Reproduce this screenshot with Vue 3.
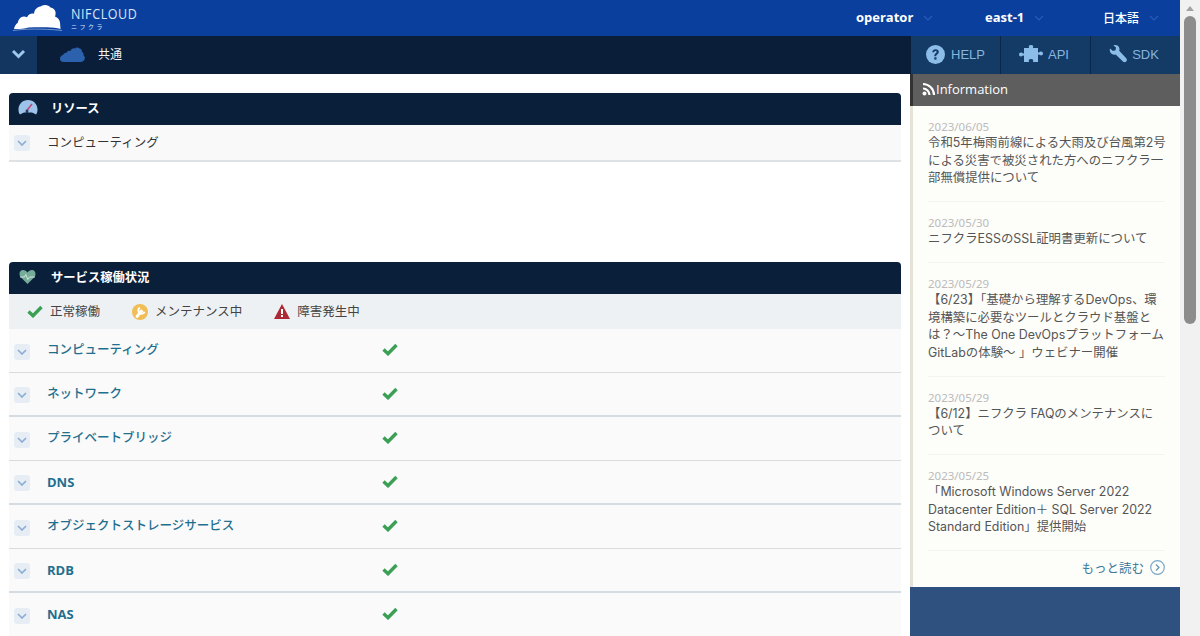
<script setup>
const statusRows = [
  { name: 'コンピューティング' },
  { name: 'ネットワーク' },
  { name: 'プライベートブリッジ' },
  { name: 'DNS', latin: true },
  { name: 'オブジェクトストレージサービス' },
  { name: 'RDB', latin: true },
  { name: 'NAS', latin: true }
]
const news = [
  { date: '2023/06/05', lines: ['令和5年梅雨前線による大雨及び台風第2号', 'による災害で被災された方へのニフクラ一', '部無償提供について'] },
  { date: '2023/05/30', lines: ['ニフクラESSのSSL証明書更新について'] },
  { date: '2023/05/29', lines: ['【6/23】「基礎から理解するDevOps、環', '境構築に必要なツールとクラウド基盤と', 'は？～The One DevOpsプラットフォーム', 'GitLabの体験～ 」ウェビナー開催'] },
  { date: '2023/05/29', lines: ['【6/12】ニフクラ FAQのメンテナンスに', 'ついて'] },
  { date: '2023/05/25', lines: ['「Microsoft Windows Server 2022', 'Datacenter Edition＋ SQL Server 2022', 'Standard Edition」提供開始'] }
]
</script>

<template>
  <div class="page">
    <div class="app">
      <header class="top">
        <div class="logo">
          <svg width="50" height="28" viewBox="0 0 50 28"><path fill="#fff" d="M1 25c.5-3 2-5 4-6.500 0-1 .2-2 1-3 1-2 3-3 5-3 1 0 2 .2 3 .8 1-2.300 3-3.800 5.500-3.800.6 0 1 0 1.500.2C21.500 5.500 24 3 27.500 2.500c1-.7 2.500-1.500 4.500-1.500 2.500 0 4.500 1 5.500 2.500 2.500.3 4.500 2 5 4.500.3 1.500 0 3-.5 4.500 2.800 1 4.500 3 5 6 .2 2 .3 4 .5 6.500-4-1-8-1.700-14-1.800-6-.1-12-.1-18 .3C11 24.700 6 25.200 1 25z"/><path d="M0 26.500c6-.8 12-1.300 20-1.400 9-.1 20 .3 29 1.400" stroke="#b9cdeb" stroke-width=".6" fill="none"/></svg>
          <div class="logo-text">
            <span class="logo-name">NIFCLOUD</span>
            <span class="logo-sub">ニフクラ</span>
          </div>
        </div>
        <nav class="top-menu">
          <div class="tm tm1"><b>operator</b><svg class="tm-ch" width="10" height="6" viewBox="0 0 10 6"><path d="M1 1l4 4 4-4" fill="none" stroke="#2a5bb5" stroke-width="1.2"/></svg></div>
          <div class="tm tm2"><b>east-1</b><svg class="tm-ch" width="10" height="6" viewBox="0 0 10 6"><path d="M1 1l4 4 4-4" fill="none" stroke="#2a5bb5" stroke-width="1.2"/></svg></div>
          <div class="tm tm3"><b>日本語</b><svg class="tm-ch" width="10" height="6" viewBox="0 0 10 6"><path d="M1 1l4 4 4-4" fill="none" stroke="#2a5bb5" stroke-width="1.2"/></svg></div>
        </nav>
      </header>

      <div class="subnav">
        <div class="toggle">
          <svg width="15" height="10" viewBox="0 0 15 10"><path d="M2 2l5.500 5.500L13 2" fill="none" stroke="#9cc9ec" stroke-width="3"/></svg>
        </div>
        <svg class="sub-cloud" width="25" height="17" viewBox="0 0 25 17"><path fill="#2c62ad" d="M0 13c0-2 1-3.500 3-4 .5-1.500 2-2.500 3.500-2.300C7.500 5 9 4.500 10.500 5 11 3 13 2 15 2.500 16 1 18.500 1 19.500 2.500c1.500 0 2.500 1.500 2.300 3 1.500 1 2.200 2.500 1.700 4 1.300.8 1.700 2.500 1 4-.7 1.500-2 2.500-4 2.500H4c-2.500 0-4-1.200-4-3z"/></svg>
        <span class="sub-title">共通</span>
        <div class="tools">
          <div class="tool">
            <svg width="19" height="19" viewBox="0 0 19 19"><circle cx="9.500" cy="9.500" r="9.500" fill="#8cbde8"/><path d="M6.300 7.300c.1-1.900 1.400-3 3.300-3 1.900 0 3.200 1.100 3.200 2.700 0 2.200-2.600 2.300-2.600 4.300H8.300c0-2.900 2.300-3 2.300-4.200 0-.6-.4-1-1.100-1-.7 0-1.100.5-1.200 1.200z" fill="#143a66"/><rect x="8.300" y="12.300" width="2.200" height="2.300" fill="#143a66"/></svg>
            <span>HELP</span>
          </div>
          <div class="tool tool-shift">
            <svg width="24" height="19" viewBox="0 0 24 19"><path fill="#8cbde8" d="M5 3h4.500c.6 0 .7-.5.400-1C9.500 1.300 9.800 0 12 0s2.500 1.300 2.100 2c-.3.500-.2 1 .4 1H19v4c0 .6.500.7 1 .4.800-.5 1-.9 2-.9 1.200 0 2 .9 2 2s-.8 2-2 2c-1 0-1.200-.4-2-.9-.5-.3-1-.2-1 .4V17h-4.500c-.6 0-.7-.5-.4-1 .4-.7.100-2-2.100-2s-2.500 1.300-2.100 2c.3.500.2 1-.4 1H5v-6c0-.6-.5-.7-1-.4-.8.500-1 .9-2 .9-1.200 0-2-.9-2-2s.8-2 2-2c1 0 1.200.4 2 .9.500.3 1 .2 1-.4z"/></svg>
            <span>API</span>
          </div>
          <div class="tool tool-shift">
            <svg width="18" height="19" viewBox="0 0 18 19"><path fill="#8cbde8" d="M1 3.500L4 6l2.500-.8.500-2.700L4.500.4C6.800-.4 9 .3 10 2.200c.6 1.200.6 2.400.2 3.500l7 7.500c.9 1 .9 2.400 0 3.300-.9.900-2.300 1-3.300.1L6.700 9.400c-1.300.4-2.600.3-3.700-.4C1 7.900.4 5.700 1 3.500z"/></svg>
            <span>SDK</span>
          </div>
        </div>
      </div>

      <div class="content">
        <main class="main">
          <section class="panel res">
            <h2 class="panel-head">
              <svg class="ph-icon" width="20" height="18" viewBox="0 0 20 18"><path fill="#9cc4ea" d="M10 0C4.500 0 .5 4.200.5 9.500c0 2 .4 3.500 1.300 5L6 12.500h8l4.200 2c.9-1.500 1.300-3 1.300-5C19.500 4.200 15.500 0 10 0z"/><path d="M14 4l-5.500 7" stroke="#c2416d" stroke-width="1.400"/><path d="M9 10.500v6" stroke="#0a1f3a" stroke-width="1.500"/><circle cx="9" cy="11" r="1.500" fill="#2a3a5c"/></svg>
              <span class="ph-text">リソース</span>
            </h2>
            <div class="res-row">
              <span class="chev"><svg width="10" height="6" viewBox="0 0 10 6"><path d="M1 1l4 4 4-4" fill="none" stroke="#8aafd2" stroke-width="1.700"/></svg></span>
              <span class="res-name">コンピューティング</span>
            </div>
          </section>

          <section class="panel">
            <h2 class="panel-head">
              <svg class="ph-icon heart" width="17" height="14" viewBox="0 0 17 14"><path fill="#74ab99" d="M8.500 14L1.500 7C-.5 4.500.5 0 4 0c2 0 3.500 1 4.500 2.500C9.500 1 11 0 13 0c3.500 0 4.500 4.500 2.500 7z"/><path d="M1 7h4.500l1.300-2.500 2 5L10.500 7H16" fill="none" stroke="#dcebe4" stroke-width=".9"/></svg>
              <span class="ph-text">サービス稼働状況</span>
            </h2>
            <div class="legend">
              <span class="lg lg1"><svg width="16" height="13" viewBox="0 0 16 13"><path d="M1.500 6.500l4.500 4.200 8.500-8.700" fill="none" stroke="#3c9f56" stroke-width="3.400"/></svg><span class="lg-t">正常稼働</span></span>
              <span class="lg lg2"><svg width="16" height="16" viewBox="0 0 16 16"><circle cx="8" cy="8" r="8" fill="#f1bd55"/><path d="M5 12.500L9.500 7" stroke="#fff" stroke-width="2.800" stroke-linecap="round"/><path d="M7.800 3.600a3.300 3.300 0 1 0 4.800 4.200" fill="none" stroke="#fff" stroke-width="2"/></svg><span class="lg-t">メンテナンス中</span></span>
              <span class="lg lg3"><svg width="16" height="15" viewBox="0 0 16 15"><path d="M8 0l8 15H0z" fill="#ac2a33"/><rect x="7" y="5" width="2" height="5" fill="#fff"/><rect x="7" y="11" width="2" height="2" fill="#fff"/></svg><span class="lg-t">障害発生中</span></span>
            </div>
            <div v-for="(row, i) in statusRows" :key="row.name" class="st-row" :class="{ thick: i % 2 === 1 }">
              <span class="chev"><svg width="10" height="6" viewBox="0 0 10 6"><path d="M1 1l4 4 4-4" fill="none" stroke="#8aafd2" stroke-width="1.700"/></svg></span>
              <span class="st-name" :class="{ latin: row.latin }">{{ row.name }}</span>
              <svg class="st-ok" width="16" height="13" viewBox="0 0 16 13"><path d="M1.500 6.500l4.500 4.200 8.500-8.700" fill="none" stroke="#3c9f56" stroke-width="3.400"/></svg>
            </div>
          </section>
        </main>

        <aside class="side">
          <div class="info-head">
            <svg width="14" height="14" viewBox="0 0 14 14"><circle cx="2.500" cy="11.500" r="2" fill="#fff"/><path d="M1 6.500a6.500 6.500 0 0 1 6.500 6.500M1 2a11 11 0 0 1 11 11" fill="none" stroke="#fff" stroke-width="2.200"/></svg>
            <span>Information</span>
          </div>
          <div class="news-list">
            <article v-for="(n, i) in news" :key="i" class="news">
              <div class="date">{{ n.date }}</div>
              <div v-for="l in n.lines" :key="l" class="line">{{ l }}</div>
            </article>
            <div class="more">
              <span>もっと読む</span>
              <svg width="15" height="15" viewBox="0 0 15 15"><circle cx="7.500" cy="7.500" r="6.800" fill="none" stroke="#7aa7c7" stroke-width="1.200"/><path d="M6 4.500l3 3-3 3" fill="none" stroke="#5f93b3" stroke-width="1.200"/></svg>
            </div>
          </div>
          <div class="side-foot"></div>
        </aside>
      </div>
    </div>

    <div class="scrollbar">
      <div class="sb-arrow"></div>
      <div class="sb-thumb"></div>
    </div>
  </div>
</template>

<style>
html, body { margin: 0; height: 100%; overflow: hidden; background: #fff; }
</style>

<style scoped>
.page {
  display: flex;
  width: 1200px;
  height: 636px;
  overflow: hidden;
  font-family: "Noto Sans", "Noto Sans CJK JP", sans-serif;
  font-size: 12.500px;
  color: #333;
}
.app { width: 1180px; flex: none; display: flex; flex-direction: column; }
.top {
  height: 36px;
  flex: none;
  background: #0a3f9e;
  display: flex;
  align-items: center;
  justify-content: space-between;
}
.logo { display: flex; align-items: center; padding-left: 13px; }
.logo-text { display: flex; flex-direction: column; margin-left: 8px; color: #d9e6f7; padding-top: 2px; }
.logo-name { font-family: "Open Sans", sans-serif; font-size: 12.500px; line-height: 14px; letter-spacing: 0.600px; transform: scaleY(1.150); }
.logo-sub { font-family: "Noto Sans CJK JP", sans-serif; font-size: 6px; line-height: 8px; letter-spacing: 2.500px; margin-top: 2px; }
.top-menu { display: flex; height: 100%; }
.tm { display: flex; align-items: center; color: #fff; padding-bottom: 2px; box-sizing: border-box; }
.tm b { font-weight: 700; font-family: "Open Sans", sans-serif; font-size: 13px; }
.tm3 b { font-family: "Noto Sans CJK JP", sans-serif; font-weight: 500; font-size: 12px; }
.tm1 { width: 129px; }
.tm2 { width: 118px; }
.tm3 { width: 77px; }
.tm-ch { margin-left: 10px; margin-top: 2px; }
.subnav {
  height: 38px;
  flex: none;
  background: #0a1e3a;
  display: flex;
  align-items: center;
}
.toggle {
  width: 37px;
  height: 100%;
  background: #133660;
  display: flex;
  align-items: center;
  justify-content: center;
  padding-bottom: 2px;
  box-sizing: border-box;
}
.sub-cloud { margin-left: 23px; margin-bottom: 2px; }
.sub-title { margin-left: 13px; color: #f0f3f7; font-size: 12px; padding-bottom: 3px; font-family: "Noto Sans CJK JP", sans-serif; }
.tools { margin-left: auto; display: flex; height: 100%; }
.tool {
  width: 90px;
  height: 100%;
  box-sizing: border-box;
  background: #143a66;
  border-left: 1px solid #0a2648;
  display: flex;
  align-items: center;
  justify-content: center;
  gap: 5px;
  font-family: "Liberation Sans", sans-serif;
  font-size: 13px;
  color: #86b5df;
  padding-bottom: 2px;
}
.tool:first-child { border-left: none; width: 89px; gap: 6px; }
.tool-shift { padding-right: 3px; }
.content { display: flex; flex: 1; min-height: 0; }
.main { width: 892px; margin-left: 9px; margin-right: 9px; padding-top: 19px; flex: none; }
.panel.res { height: 169px; }
.panel-head {
  margin: 0;
  height: 32px;
  background: #0a1f3a;
  border-radius: 4px 4px 0 0;
  color: #fff;
  font-size: 12.300px;
  font-family: "Noto Sans CJK JP", sans-serif;
  font-weight: 700;
  display: flex;
  align-items: center;
  position: relative;
  padding-left: 42px;
}
.ph-text { padding-bottom: 3px; }
.ph-icon { position: absolute; left: 9px; top: 7px; }
.ph-icon.heart { left: 10px; top: 8px; }
.res-row {
  height: 37px;
  box-sizing: border-box;
  background: #f9f9f9;
  border-bottom: 2px solid #dfe2e5;
  display: flex;
  align-items: center;
  padding: 0 0 0 5px;
  font-size: 12.500px;
  color: #333;
}
.chev {
  width: 16px;
  height: 16px;
  border-radius: 3px;
  background: #e7edf4;
  display: flex;
  align-items: center;
  justify-content: center;
  flex: none;
}
.st-row .chev { margin-top: 2px; }
.res-name { margin-left: 17px; font-family: "Noto Sans CJK JP", sans-serif; padding-bottom: 3px; }
.legend {
  height: 35px;
  background: #eef1f3;
  display: flex;
  align-items: center;
  font-size: 12.500px;
  font-family: "Noto Sans CJK JP", sans-serif;
  color: #444;
  padding-left: 18px;
}
.lg { display: flex; align-items: center; gap: 7px; }
.lg-t { padding-bottom: 3px; }
.lg2 { margin-left: 32px; }
.lg3 { margin-left: 32px; }
.st-row {
  height: 44px;
  box-sizing: border-box;
  background: #fafafa;
  border-bottom: 1px solid #d9dcdf;
  display: flex;
  align-items: center;
  padding-left: 5px;
  font-size: 12.500px;
  font-weight: 500;
  color: #1f6f8f;
}
.st-row.thick { border-bottom: 2px solid #d3dbe3; }
.st-row .st-name { margin-left: 17px; width: 335px; padding-bottom: 4px; }
.st-row .st-name.latin { font-family: "Open Sans", sans-serif; font-size: 13px; font-weight: 700; padding-bottom: 1px; }
.st-ok { margin-bottom: 2px; }
.side { width: 270px; flex: none; display: flex; flex-direction: column; background: linear-gradient(#333 32px, #e5e3d8 32px); }
.info-head {
  margin-left: 3px;
  height: 32px;
  flex: none;
  background: #5e5e5e;
  color: #fff;
  display: flex;
  align-items: center;
  padding: 0 0 2px 9px;
  box-sizing: border-box;
  font-family: "Open Sans", sans-serif;
  font-size: 13px;
}
.news-list {
  margin-left: 3px;
  height: 481px;
  flex: none;
  background: #fdfdfa;
  padding: 0 15px 0 15px;
}
.news { border-bottom: 1px solid #f5f4ef; padding-bottom: 14.500px; }
.date { padding-top: 13px; font-size: 11.500px; line-height: 15px; color: #bbb; }
.line { font-family: Inter, "Noto Sans CJK JP", sans-serif; font-size: 12.400px; line-height: 17.500px; color: #555; white-space: nowrap; }
.more {
  display: flex;
  align-items: center;
  justify-content: flex-end;
  gap: 6px;
  font-size: 12.500px;
  color: #3a7a9a;
  height: 36px;
  padding-bottom: 3px;
  box-sizing: border-box;
}
.side-foot { flex: 1; background: #2f5180; }
.scrollbar { width: 20px; flex: none; background: #f1f1f1; box-sizing: border-box; padding: 0 4px; }
.sb-arrow {
  width: 0;
  height: 0;
  margin: 6px auto 5px;
  border-left: 4px solid transparent;
  border-right: 4px solid transparent;
  border-bottom: 5px solid #a3a3a3;
}
.sb-thumb { height: 308px; background: #8c8c8c; border-radius: 6px; }
</style>
